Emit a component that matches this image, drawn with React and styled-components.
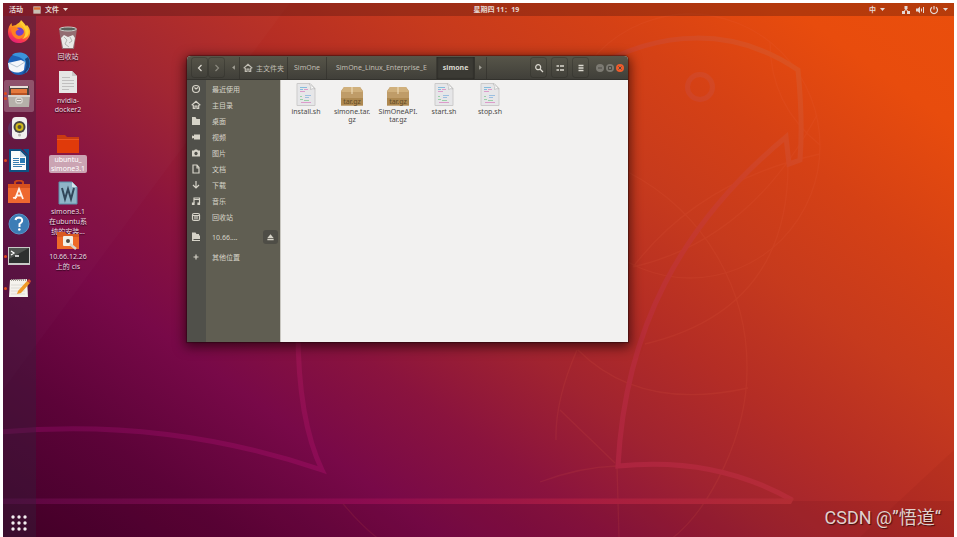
import React from "react";
import styled, { createGlobalStyle, css } from "styled-components";

const GlobalStyle = createGlobalStyle`
  *, *::before, *::after { box-sizing: border-box; }
  html, body { margin: 0; padding: 0; background: #fff; }
  body { font-family: "Noto Sans", "Noto Sans CJK SC", sans-serif; font-size: 7px; overflow: hidden; }
  button { font: inherit; color: inherit; background: none; border: 0; padding: 0; margin: 0; cursor: pointer; }
  ul { list-style: none; margin: 0; padding: 0; }
  svg { display: block; flex: none; }
`;

const Frame = styled.div`
  height: 100vh;
  padding: 3px 3px 0;
`;

const Screen = styled.div`
  position: relative;
  height: 100%;
  overflow: hidden;
  display: grid;
  grid-template: 13px 1fr / 33px 1fr;
  color: #fff;
  background: linear-gradient(
    36deg,
    #420029 0%,
    #5c0338 14%,
    #780948 26%,
    #8a133e 36%,
    #a02330 46%,
    #b42d25 56%,
    #c63a1d 67%,
    #d54115 78%,
    #e84c0d 90%,
    #ea4f0c 100%
  );
`;

const WallpaperArt = styled.svg`
  position: absolute;
  inset: 0;
  width: 100%;
  height: 100%;
`;

const TopBar = styled.header`
  position: relative;
  grid-column: 1 / -1;
  display: grid;
  grid-template-columns: 13fr auto 12fr;
  align-items: center;
  padding: 0 6px;
  background: rgba(50, 10, 10, 0.28);
  color: #e6d8d4;
  font-weight: 700;
  line-height: 13px;
`;

const BarGroup = styled.div`
  display: flex;
  align-items: center;
  gap: ${(p) => p.$gap}px;
  justify-content: ${(p) => (p.$end ? "flex-end" : "flex-start")};
`;

const BarButton = styled.button`
  display: flex;
  align-items: center;
  gap: 4px;
`;

const Dock = styled.nav`
  position: relative;
  display: flex;
  flex-direction: column;
  justify-content: space-between;
  background: rgba(50, 35, 60, 0.38);
`;

const DockButton = styled.button`
  position: relative;
  display: flex;
  align-items: center;
  justify-content: center;
  width: 30px;
  height: ${(p) => (p.$last ? 28 : 32)}px;
  margin-left: 1px;
  border-radius: 2px;
  background: ${(p) => (p.$active ? "rgba(255,255,255,0.24)" : "transparent")};
`;

const RunDots = styled.span`
  position: absolute;
  left: 0;
  top: 0;
  height: 100%;
  display: flex;
  flex-direction: column;
  justify-content: center;
  gap: 2px;
`;

const RunDot = styled.i`
  width: 3px;
  height: 3px;
  border-radius: 50%;
  background: #e2491c;
`;

const Desktop = styled.main`
  position: relative;
`;

const DesktopItem = styled.button`
  position: absolute;
  left: 10px;
  top: ${(p) => p.$top}px;
  width: 44px;
  display: flex;
  flex-direction: column;
  align-items: center;
  gap: ${(p) => (p.$selected ? 1 : 2)}px;
`;

const DesktopLabel = styled.span`
  min-width: 38px;
  border-radius: 2px;
  line-height: ${(p) => (p.$loose ? 10 : 9)}px;
  white-space: pre;
  text-align: center;
  color: #ecdae2;
  text-shadow: 0 1px 1px rgba(0, 0, 0, 0.8);
  ${(p) =>
    p.$selected &&
    css`
      background: rgba(222, 205, 212, 0.78);
      text-shadow: none;
      color: #fff;
    `}
`;

const Window = styled.section`
  position: absolute;
  left: 151px;
  top: 40px;
  width: 48%;
  min-width: 441px;
  max-width: 441px;
  min-height: 286px;
  display: flex;
  flex-direction: column;
  border-radius: 4px 4px 0 0;
  background: #f2f1f0;
  box-shadow: 0 3px 12px 2px rgba(20, 0, 5, 0.65), 0 0 1px 1px rgba(30, 10, 10, 0.4);
`;

const TitleBar = styled.header`
  height: 24px;
  display: flex;
  align-items: center;
  padding: 1px 4px;
  border-radius: 4px 4px 0 0;
  border-bottom: 1px solid #33322d;
  background: linear-gradient(#575549, #403f39);
  color: #c0bdb3;
`;

const ToolButton = styled.button`
  height: 21px;
  width: 17px;
  margin-right: ${(p) => p.$after || 0}px;
  display: flex;
  align-items: center;
  justify-content: center;
  border: 1px solid rgba(40, 39, 34, 0.35);
  border-radius: 3px;
  color: ${(p) => (p.$dim ? "#8b897f" : "#dcd9d0")};
`;

const PathBar = styled.nav`
  flex: 1;
  display: flex;
  align-items: center;
`;

const Crumb = styled.button`
  height: 22px;
  padding: 0 ${(p) => p.$pad || 6}px;
  display: flex;
  align-items: center;
  gap: 3px;
  white-space: nowrap;
  border-right: 1px solid rgba(48, 47, 42, 0.6);
  ${(p) =>
    p.$dim &&
    css`
      color: #a3a197;
    `}
  ${(p) =>
    p.$current &&
    css`
      font-weight: 700;
      color: #dcd9d0;
      background: #3b3a34;
      box-shadow: inset 0 0 2px #1d1c19;
    `}
`;

const WindowButtons = styled.div`
  display: flex;
  gap: 2px;
  padding-left: 3px;
  margin-left: 4px;
`;

const RoundButton = styled.button`
  width: 8px;
  height: 8px;
  border-radius: 50%;
  display: flex;
  align-items: center;
  justify-content: center;
  color: #4a4943;
  background: ${(p) => (p.$close ? "#ef5b2b" : "#7c7a72")};
`;

const WindowBody = styled.div`
  flex: 1;
  display: flex;
`;

const Sidebar = styled.nav`
  width: 94px;
  padding-top: 1px;
  border-right: 1px solid #c9c7c1;
  background: linear-gradient(90deg, #50504a 19px, #605e52 19px);
  color: #d6d3c8;
`;

const Place = styled.button`
  width: 100%;
  height: ${(p) => (p.$tall ? 20 : 16)}px;
  margin-top: ${(p) => (p.$first ? 2 : 0)}px;
  display: grid;
  grid-template-columns: 18px 1fr auto;
  align-items: center;
  justify-items: center;
  text-align: left;
`;

const PlaceRow = styled.li`
  display: flex;
  align-items: center;
`;

const PlaceName = styled.span`
  justify-self: start;
  padding-left: 7px;
`;

const Eject = styled.button`
  width: 15px;
  height: 14px;
  margin: 2px 2px 0 0;
  flex: none;
  display: flex;
  align-items: center;
  justify-content: center;
  border-radius: 3px;
  background: #4e4d46;
`;

const Files = styled.div`
  flex: 1;
  display: grid;
  grid-template-columns: repeat(auto-fill, 46px);
  align-content: start;
  padding: 3px 2px;
  color: #4b4a48;
`;

const FileItem = styled.button`
  display: flex;
  flex-direction: column;
  align-items: center;
  gap: 1px;
  line-height: 8px;
  white-space: pre;
  text-align: center;
`;

const Watermark = styled.p`
  position: absolute;
  right: 13px;
  bottom: 6px;
  margin: 0;
  font-family: Roboto, "Noto Sans CJK SC", sans-serif;
  font-size: 18px;
  line-height: 26px;
  color: #e2d0cc;
  text-shadow: 1px 1px 1px rgba(40, 10, 10, 0.8);
`;

function Wallpaper() {
  return (
    <WallpaperArt viewBox="3 3 951 534" preserveAspectRatio="none" aria-hidden="true">
      <defs>
        <linearGradient id="bird" gradientUnits="userSpaceOnUse" x1="180" y1="537" x2="745" y2="-60">
          <stop offset="0" stopColor="#70064a" />
          <stop offset=".18" stopColor="#8b0b55" />
          <stop offset=".42" stopColor="#ab2340" />
          <stop offset=".58" stopColor="#b82e35" />
          <stop offset=".78" stopColor="#cc4028" />
          <stop offset="1" stopColor="#e25a1c" />
        </linearGradient>
        <linearGradient id="floor">
          <stop offset="0" stopColor="#5b0640" />
          <stop offset=".45" stopColor="#8b0b50" />
          <stop offset=".75" stopColor="#a81d40" />
          <stop offset="1" stopColor="#b32d33" />
        </linearGradient>
      </defs>
      <path d="M3 501H954V537H3Z" fill="#300010" opacity=".08" />
      <path d="M3 3H290L3 390Z" fill="#fff" opacity=".015" />
      <path d="M954 450V537H860Z" fill="#500" opacity=".05" />
      <g fill="none" stroke="#ee6a4a" opacity=".11" strokeWidth="1.3">
        <ellipse cx="690" cy="146" rx="130" ry="132" />
        <path d="M788 165Q788 310 645 344M628 172C710 215 748 295 747 370C747 435 710 510 670 540M633 267Q700 180 820 154M770 42Q770 105 820 145M578 350Q640 412 748 388M577 350Q555 400 556 440M633 267Q750 240 817 115M617 466L619 537M560 410L615 463M340 500Q380 550 420 560M540 482Q580 467 617 466" />
      </g>
      <g fill="none" stroke="url(#bird)" strokeWidth="5">
        <path d="M590 70C660 28 735 27 798 70Q803 120 800 160L789 164L786 137C680 225 625 330 618 466Q715 456 792 500" />
        <path d="M0 432C100 423 210 432 322 470Q298 420 298 330" />
        <circle cx="700" cy="87" r="12.5" />
      </g>
      <path d="M0 498.500H794L791 504H0Z" fill="url(#floor)" />
    </WallpaperArt>
  );
}

const Caret = () => (
  <svg width="5" height="3" viewBox="0 0 5 3"><path d="M0 0H5L2.500 3Z" fill="currentColor" /></svg>
);

const Svg = ({ s = 24, w, children }) => (
  <svg width={w || s} height={s} viewBox={`0 0 ${w || s} ${s}`} aria-hidden="true">{children}</svg>
);

const FirefoxIcon = () => (
  <Svg>
    <defs>
      <linearGradient id="ff" x1=".8" y1="0" x2=".3" y2="1">
        <stop offset="0" stopColor="#ffe83b" /><stop offset=".45" stopColor="#ff9a1e" /><stop offset=".75" stopColor="#fb3c4c" /><stop offset="1" stopColor="#e01d7c" />
      </linearGradient>
    </defs>
    <path d="M14 0C17 3 18 4 19 6L20 5C23 8 24 12 22.500 16C20.500 21 16 23.500 11 23C5 22.500 1 18 1 12C1 8 2.500 5 4.500 3L5 6L9 5C11 3 13 3 14 0Z" fill="url(#ff)" />
    <circle cx="12" cy="12.500" r="5" fill="#7440ca" />
    <path d="M4 7C8 6 10 7 12 10C9 10 8 12 9 14C11 17 16 16 17 12C18 17 15 19 11 19C6 18 4 13 4 7Z" fill="#ff8022" />
    <path d="M14 1C13 5 17 6 18 10C19 13 18 17 15 19C21 18 23 13 21 9C19 6 16 5 14 1Z" fill="#ffcf32" />
  </Svg>
);

const ThunderbirdIcon = () => (
  <Svg>
    <circle cx="12" cy="12" r="11" fill="#1e62b8" />
    <path d="M5 3C10-1 19 0 22 6C24 11 23 17 19 21C20 14 19 8 12 5Z" fill="#3c94dc" />
    <path d="M1 11L14 8L18 10L17 18C12 22 5 21 2 17Z" fill="#f4f7fa" />
    <path d="M2 11L10 15L18 10" fill="none" stroke="#b7c5d2" />
    <path d="M18 7C20 12 20 18 15 22C22 20 25 12 21 5Z" fill="#174681" />
  </Svg>
);

const FilesIcon = () => (
  <Svg>
    <path d="M2 2H22V14H2Z" fill="#4c443f" />
    <path d="M3 2H21V4H3Z" fill="#e7e0d8" />
    <path d="M4 5H20V11H4Z" fill="#e4793c" />
    <path d="M4 9H20V11H4Z" fill="#b85324" />
    <path d="M1 11H23L22 23H2Z" fill="#b5b0aa" />
    <path d="M1 11H23V13H1Z" fill="#d7d2cd" />
    <rect x="9" y="14" width="6" height="5" rx="1" fill="#a39e99" stroke="#ece9e4" />
    <path d="M10 16.500H14" stroke="#f5f2ef" />
  </Svg>
);

const RhythmboxIcon = () => (
  <Svg>
    <circle cx="12" cy="13" r="11" fill="#4063a8" opacity=".3" />
    <rect x="5" y="1" width="15" height="22" rx="4" fill="#f1f0ee" />
    <circle cx="12.500" cy="11" r="6" fill="#474643" />
    <circle cx="12.500" cy="11" r="4" fill="#d0b91c" />
    <circle cx="12.500" cy="11" r="2" fill="#555238" />
    <circle cx="12.500" cy="19" r="1.500" fill="#b8b7b4" />
  </Svg>
);

const WriterIcon = () => (
  <Svg>
    <path d="M2 1H14L22 8V24H2Z" fill="#105082" />
    <path d="M16 1H22V8Z" fill="#0a5592" />
    <path d="M4 3H13L19 9V22H4Z" fill="#fbfbfa" />
    <path d="M13 3V9H19Z" fill="#bfd6e7" />
    <path d="M6 10.500H12M6 12.500H12M6 14.500H12M6 16.500H18M6 18.500H15" stroke="#397eb0" />
    <path d="M13 10H18V15H13Z" fill="#287ab3" />
  </Svg>
);

const SoftwareIcon = () => (
  <Svg>
    <path d="M8 6V2Q12-1 16 2V6" fill="none" stroke="#c84519" strokeWidth="2" />
    <path d="M1 4H23V23H1Z" fill="#ee6830" />
    <path d="M1 4H23V8H1Z" fill="#d7501e" />
    <path d="M8 19L12 9L16 19M9 15.500H15M6 18L10 17" fill="none" stroke="#fff4ed" strokeWidth="1.800" />
  </Svg>
);

const HelpIcon = () => (
  <Svg>
    <circle cx="12" cy="12" r="10" fill="#3c7db6" stroke="#5a97c8" />
    <path d="M8.500 8Q9 5.500 12 5.500Q16 6 15 9.500Q14 11 12.500 12V15" fill="none" stroke="#fff" strokeWidth="2" />
    <circle cx="12.300" cy="17.500" r="1.300" fill="#fff" />
  </Svg>
);

const TerminalIcon = () => (
  <Svg>
    <rect x="1" y="3" width="22" height="18" fill="#c9c9c7" />
    <rect x="2" y="4" width="20" height="15" fill="#2d302f" />
    <path d="M2 4H22L2 15Z" fill="#505451" />
    <path d="M4 7L7 9L4 11M8 12H12" fill="none" stroke="#fff" strokeWidth="1.300" />
  </Svg>
);

const EditorIcon = () => (
  <Svg>
    <path d="M3 4L20 3L21 21H2Z" fill="#f5f3ed" />
    <path d="M4 4H19" stroke="#9f9c92" strokeDasharray="1 1" strokeWidth="2" />
    <path d="M4 9H18M4 12H18M4 15H18M4 18H18" stroke="#dddbd5" />
    <path d="M11 15L20 5L23 7L14 17L10 18Z" fill="#f09a27" />
    <path d="M20 5L22 3L24 5L23 7Z" fill="#d84c34" />
  </Svg>
);

const GridIcon = () => (
  <Svg s={16}>
    {[2, 8, 14].flatMap((y) => [2, 8, 14].map((x) => <circle key={`${x}-${y}`} cx={x} cy={y} r="1.700" fill="#f3edf0" />))}
  </Svg>
);

const TrashIcon = () => (
  <Svg s={24}>
    <path d="M3 3H21L18 23H6Z" fill="#8f8b8c" opacity=".7" />
    <path d="M5 12L8 9L12 11L17 9L19 12L17 22H7Z" fill="#e8e8e6" />
    <path d="M8 11L11 14L9 18L13 21M14 11L16 15L13 17" fill="none" stroke="#b3b3b0" />
    <ellipse cx="12" cy="3" rx="8.500" ry="2" fill="#5c605b" stroke="#c9cac5" />
  </Svg>
);

const TextIcon = () => (
  <Svg s={24}>
    <path d="M3 1H16L21 6V23H3Z" fill="#e6e6e5" />
    <path d="M16 1V6H21Z" fill="#c8c7c6" />
    <path d="M6 7.500H14M6 10.500H18M6 13.500H18M6 16.500H18M6 19.500H13" stroke="#c1bfbf" />
  </Svg>
);

const FolderIcon = () => (
  <Svg s={20} w={24}>
    <path d="M1 1H9L11 3H23V19H1Z" fill="#c93a12" />
    <path d="M1 5H23V19H1Z" fill="#e03a0a" />
    <path d="M1 5H23V6H1Z" fill="#ea5626" />
  </Svg>
);

const WordIcon = () => (
  <Svg s={24}>
    <path d="M3 1H16L21 6V23H3Z" fill="#8fb5c7" stroke="#5d91ab" />
    <path d="M16 1V6H21Z" fill="#d4e4ec" />
    <path d="M6 7L9 18L12 8L15 18L18 7" fill="none" stroke="#31485a" strokeWidth="2" />
  </Svg>
);

const NetFolderIcon = () => (
  <Svg s={20} w={24}>
    <path d="M1 2H9L11 4H23V19H1Z" fill="#d95a22" />
    <path d="M1 7H23V19H1Z" fill="#ee6a28" />
    <rect x="7" y="6" width="10" height="10" rx="1" fill="#f3f0e7" />
    <circle cx="12" cy="11" r="2" fill="#504a43" />
    <path d="M14 14L20 19" stroke="#d9d5cc" strokeWidth="2.500" />
  </Svg>
);

const ScriptIcon = () => (
  <Svg s={24}>
    <path d="M3 .5H16L21 5.500V22.500H3Z" fill="#e6e6e8" stroke="#cccbcb" />
    <path d="M15 1Q18 3 16.500 6.500Q19 5 21 6L16 .5Z" fill="#fbfbfb" stroke="#b8b7b6" strokeWidth=".7" />
    <path d="M6 4.500H13M6 6.500H9" stroke="#86bcdc" />
    <path d="M10 6.500H14M6 8.500H11M7 19.500H17" stroke="#dc9cca" />
    <path d="M6 13.500H8M6 16.500H9M10 17.500H15" stroke="#9ad0a8" />
    <path d="M11 12.500H17M11 14.500H15" stroke="#9cbfe0" />
  </Svg>
);

const ArchiveIcon = () => (
  <Svg s={24}>
    <path d="M4 4H20L23 8V22.500H1V8Z" fill="#bf9c68" />
    <path d="M4 4H20L23 9H1Z" fill="#d0b07c" />
    <path d="M1 15H23V22.500H1Z" fill="#ad8850" />
    <path d="M11.500 4H12.500V11H11.500Z" fill="#f1dfbd" />
    <text x="12" y="21" textAnchor="middle" fontSize="7" fill="#5f4a26" fontFamily="Noto Sans, sans-serif">tar.gz</text>
  </Svg>
);

const glyphs = {
  recent: <><circle cx="5" cy="5" r="3.500" /><path d="M3.500 3.500L5 5L7 3.500" /></>,
  home: <path d="M.7 5.300L5 1.300L9.300 5.300M2.300 5V8.500H4V6H6V8.500H7.700V5" />,
  folder: <path d="M1 1H4.500L5.500 3H9V9H1Z" fill="currentColor" stroke="none" />,
  video: <path d="M3 2.500H9V7.500H3V6L1 6.500V3.500L3 4Z" fill="currentColor" stroke="none" />,
  camera: <path d="M1 2.500H3L4 1.500H6L7 2.500H9V8.500H1ZM5 3.800A1.700 1.700 0 1 0 5.010 3.800Z" fill="currentColor" fillRule="evenodd" stroke="none" />,
  doc: <path d="M2 1H6L8 3.500V9H2ZM6 1V4H8" />,
  down: <path d="M5 1V8M2 5L5 8L8 5" />,
  music: <><path d="M3 7V2H8.500V7M3 3.500H8.500" /><path d="M1.500 7H3V8.500H1.500ZM7 7H8.500V8.500H7Z" fill="currentColor" /></>,
  trash: <><rect x="1.500" y="1.500" width="7" height="7" rx="1.500" /><path d="M2 3.500H8M4 4V7.500M6 4V7.500" /></>,
  net: <path d="M1 .5H4.500L5.500 2H8V3.500H9V7H2.500V8H9V9H1Z" fill="currentColor" stroke="none" />,
  plus: <path d="M5 2.500V7.500M2.500 5H7.500" />,
  eject: <path d="M5 1.500L8.500 5.500H1.500ZM1.500 6.500H8.500V8H1.500Z" fill="currentColor" stroke="none" />,
  back: <path d="M6.500 2L3.500 5L6.500 8" />,
  forward: <path d="M3.500 2L6.500 5L3.500 8" />,
  search: <><circle cx="4.200" cy="4.200" r="2.500" /><path d="M6 6L9 9" /></>,
  list: <path d="M1.500 3H4M5 3H9M1.500 7H4M5 7H9" strokeWidth="1.700" />,
  menu: <path d="M2.500 2.500H7.500M2.500 5H7.500M2.500 7.500H7.500" strokeWidth="1.500" />,
  left: <path d="M6.500 2.500L3.500 5L6.500 7.500Z" fill="currentColor" stroke="none" />,
  right: <path d="M3.500 2.500L6.500 5L3.500 7.500Z" fill="currentColor" stroke="none" />,
  network: <path d="M3.500 1H6.500V4H3.500ZM1 6H4V9H1ZM6 6H9V9H6ZM4.500 4H5.500L7.500 6.500H6.500L5 5L3.500 6.500H2.500Z" fill="currentColor" stroke="none" />,
  sound: <path d="M1 3.500H3L5 1.500V8.500L3 6.500H1ZM6 3.500H7V6.500H6ZM8 2H9V8H8Z" fill="currentColor" stroke="none" />,
  power: <path d="M3 2.200A3.500 3.500 0 1 0 7 2.200M5 1V4.500" />,
};

const Glyph = ({ name, size = 10 }) => (
  <svg width={size} height={size} viewBox="0 0 10 10" fill="none" stroke="currentColor" strokeWidth="1.200" aria-hidden="true">
    {glyphs[name]}
  </svg>
);

const dockApps = [
  { name: "Firefox", Icon: FirefoxIcon },
  { name: "Thunderbird", Icon: ThunderbirdIcon },
  { name: "Files", Icon: FilesIcon, active: true, dots: 2 },
  { name: "Rhythmbox", Icon: RhythmboxIcon },
  { name: "LibreOffice Writer", Icon: WriterIcon, dots: 1 },
  { name: "Ubuntu Software", Icon: SoftwareIcon },
  { name: "Help", Icon: HelpIcon },
  { name: "Terminal", Icon: TerminalIcon, dots: 1 },
  { name: "Text Editor", Icon: EditorIcon, dots: 1 },
];

const desktopItems = [
  { label: "回收站", Icon: TrashIcon, top: 10 },
  { label: "nvidia-\ndocker2", Icon: TextIcon, top: 54 },
  { label: "ubuntu_\nsimone3.1", Icon: FolderIcon, top: 118, selected: true },
  { label: "simone3.1\n在ubuntu系\n统的安装...", Icon: WordIcon, top: 165, loose: true },
  { label: "10.66.12.26\n上的 cis", Icon: NetFolderIcon, top: 214, loose: true },
];

const places = [
  ["recent", "最近使用"],
  ["home", "主目录"],
  ["folder", "桌面"],
  ["video", "视频"],
  ["camera", "图片"],
  ["doc", "文档"],
  ["down", "下载"],
  ["music", "音乐"],
  ["trash", "回收站"],
];

const files = [
  ["install.sh", ScriptIcon],
  ["simone.tar.\ngz", ArchiveIcon],
  ["SimOneAPI.\ntar.gz", ArchiveIcon],
  ["start.sh", ScriptIcon],
  ["stop.sh", ScriptIcon],
];

function FileManager() {
  return (
    <Window aria-label="simone">
      <TitleBar>
        <ToolButton aria-label="Back"><Glyph name="back" /></ToolButton>
        <ToolButton $dim $after={3} aria-label="Forward"><Glyph name="forward" /></ToolButton>
        <PathBar aria-label="Path">
          <Crumb $dim $pad={1} aria-label="Scroll left"><Glyph name="left" size={9} /></Crumb>
          <Crumb $pad={3}><Glyph name="home" />主文件夹</Crumb>
          <Crumb>SimOne</Crumb>
          <Crumb $pad={9}>SimOne_Linux_Enterprise_E</Crumb>
          <Crumb $current>simone</Crumb>
          <Crumb $dim $pad={1} aria-label="Scroll right"><Glyph name="right" size={9} /></Crumb>
        </PathBar>
        <ToolButton $after={4} aria-label="Search"><Glyph name="search" /></ToolButton>
        <ToolButton $after={4} aria-label="View"><Glyph name="list" /></ToolButton>
        <ToolButton aria-label="Menu"><Glyph name="menu" /></ToolButton>
        <WindowButtons>
          <RoundButton aria-label="Minimise"><Svg s={4}><path d="M0 2H4" stroke="currentColor" /></Svg></RoundButton>
          <RoundButton aria-label="Maximise"><Svg s={4}><path d="M.5 .5H3.500V3.500H.5Z" fill="none" stroke="currentColor" /></Svg></RoundButton>
          <RoundButton $close aria-label="Close"><Svg s={4}><path d="M.5 .5L3.500 3.500M3.500 .5L.5 3.500" stroke="currentColor" /></Svg></RoundButton>
        </WindowButtons>
      </TitleBar>
      <WindowBody>
        <Sidebar aria-label="Places">
          <ul>
            {places.map(([icon, name]) => (
              <PlaceRow key={name}>
                <Place><Glyph name={icon} /><PlaceName>{name}</PlaceName></Place>
              </PlaceRow>
            ))}
            <PlaceRow>
              <Place $tall $first><Glyph name="net" /><PlaceName>10.66....</PlaceName></Place>
              <Eject aria-label="Eject"><Glyph name="eject" size={9} /></Eject>
            </PlaceRow>
            <PlaceRow>
              <Place $tall><Glyph name="plus" /><PlaceName>其他位置</PlaceName></Place>
            </PlaceRow>
          </ul>
        </Sidebar>
        <Files>
          {files.map(([name, Icon]) => (
            <FileItem key={name}><Icon />{name}</FileItem>
          ))}
        </Files>
      </WindowBody>
    </Window>
  );
}

export default function App() {
  return (
    <Frame>
      <GlobalStyle />
      <Screen>
        <Wallpaper />
        <TopBar>
          <BarGroup $gap={10}>
            <BarButton>活动</BarButton>
            <BarButton>
              <svg width="8" height="8" viewBox="0 0 24 24" aria-hidden="true">
                <path d="M1 1H23V23H1Z" fill="#c9c0b4" /><path d="M3 4H21V11H3Z" fill="#dc7136" />
              </svg>
              文件
              <Caret />
            </BarButton>
          </BarGroup>
          <BarButton>星期四 11：19</BarButton>
          <BarGroup $gap={16} $end>
            <BarButton>中<Caret /></BarButton>
            <BarButton aria-label="System">
              <Glyph name="network" />
              <Glyph name="sound" />
              <Glyph name="power" />
              <Caret />
            </BarButton>
          </BarGroup>
        </TopBar>
        <Dock aria-label="Dock">
          <ul>
            {dockApps.map(({ name, Icon, active, dots = 0 }) => (
              <li key={name}>
                <DockButton $active={active} aria-label={name}>
                  <RunDots>{Array.from({ length: dots }, (_, i) => <RunDot key={i} />)}</RunDots>
                  <Icon />
                </DockButton>
              </li>
            ))}
          </ul>
          <DockButton $last aria-label="Show applications"><GridIcon /></DockButton>
        </Dock>
        <Desktop>
          {desktopItems.map(({ label, Icon, top, selected, loose }) => (
            <DesktopItem key={label} $top={top} $selected={selected}>
              <Icon />
              <DesktopLabel $selected={selected} $loose={loose}>{label}</DesktopLabel>
            </DesktopItem>
          ))}
          <FileManager />
        </Desktop>
        <Watermark>CSDN @”悟道“</Watermark>
      </Screen>
    </Frame>
  );
}
